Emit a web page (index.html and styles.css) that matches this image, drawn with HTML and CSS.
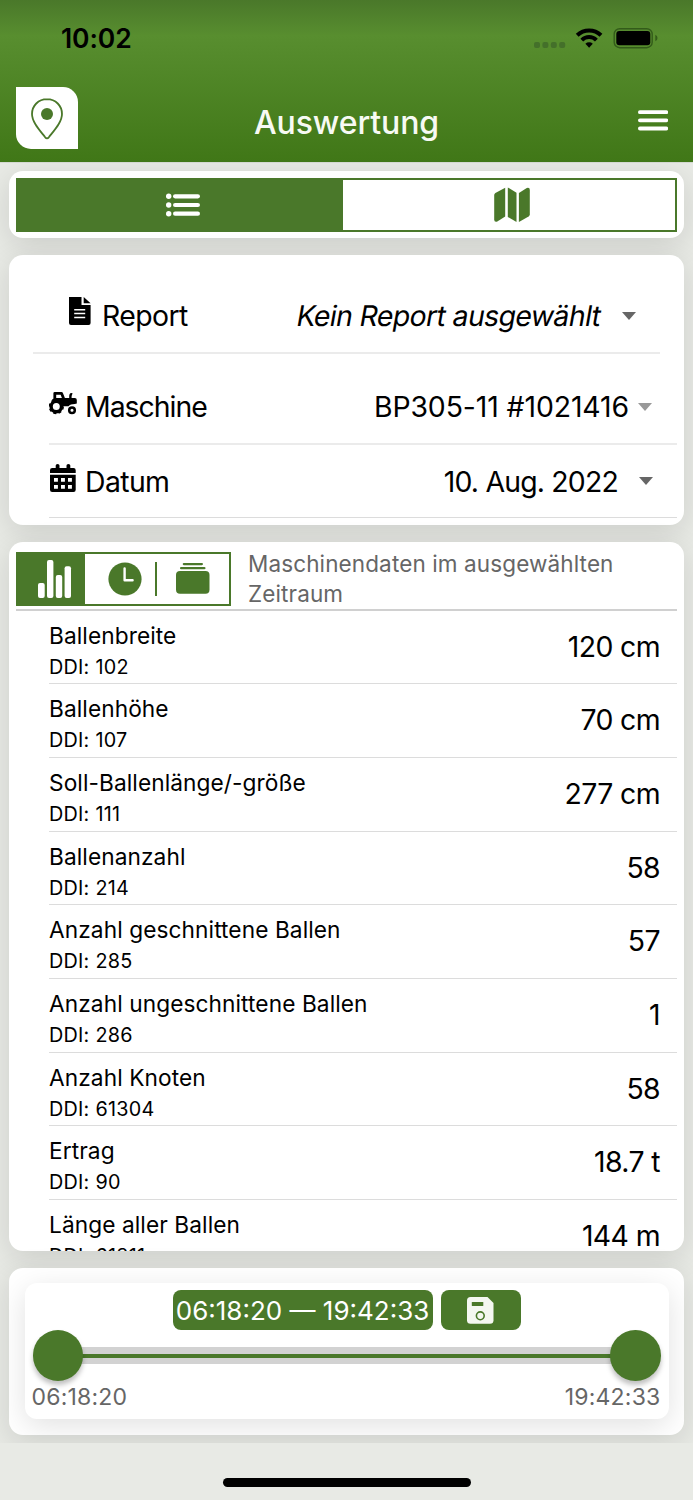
FILE: index.html
```html
<!DOCTYPE html>
<html lang="de">
    <head>
        <meta charset="UTF-8">
        <title>Auswertung</title>
        <link rel="stylesheet" href="styles.css">
    </head>
    <body>
        <header>
            <div class="statusbar">
                <span class="clock">10:02</span>
                <svg class="status-icons" width="124" height="24" viewBox="0 0 124 24">
                    <g fill="#44702a">
                        <rect x="0" y="15" width="6" height="6" rx="2"/>
                        <rect x="8.4" y="15" width="6" height="6" rx="2"/>
                        <rect x="16.8" y="15" width="6" height="6" rx="2"/>
                        <rect x="25.2" y="15" width="6" height="6" rx="2"/>
                    </g>
                    <g fill="none" stroke="#000" stroke-width="4">
                        <path d="M43.2 8.3a17.2 17.2 0 0 1 23.8 0"/>
                        <path d="M47.8 13.1a10.4 10.4 0 0 1 14.6 0"/>
                    </g>
                    <path d="M51.4 16.8a5.4 5.4 0 0 1 7.4 0L55.1 20.8z"/>
                    <rect x="80.2" y="1.7" width="38" height="19" rx="5.5" fill="none" stroke="#335b1a" stroke-width="1.4"/>
                    <rect x="82.3" y="4" width="34" height="14.2" rx="3"/>
                    <path d="M121.3 7.8q2.2 1 2.2 3.2t-2.2 3.2z" fill="#335b1a"/>
                </svg>
            </div>
            <div class="toolbar">
                <div class="logo">
                    <svg width="32" height="42" viewBox="0 0 32 42">
                        <path d="M16 1.2C7.4 1.2 1 7.7 1 16c0 8 7.5 16 13.2 23.3q1.8 2 3.6 0C23.5 32 31 24 31 16 31 7.7 24.6 1.2 16 1.2z" fill="none" stroke="#4a782a" stroke-width="1.8"/>
                        <circle cx="16" cy="16" r="6" fill="#4a782a"/>
                    </svg>
                </div>
                <h1>Auswertung</h1>
                <svg class="menu" width="30" height="21" viewBox="0 0 30 21" stroke="#fff" stroke-width="3.8" stroke-linecap="round">
                    <path d="M1.9 2.2h26.4M1.9 10.3h26.4M1.9 18.5h26.4"/>
                </svg>
            </div>
        </header>

        <main>
            <section class="card switch-card">
                <div class="switch">
                    <div class="switch-item active">
                        <svg width="34" height="24" viewBox="0 0 34 24" fill="#fff">
                            <circle cx="2.7" cy="3.3" r="2.7"/>
                            <circle cx="2.7" cy="12" r="2.7"/>
                            <circle cx="2.7" cy="20.7" r="2.7"/>
                            <rect x="7" y="1.2" width="27" height="4.2" rx="2.1"/>
                            <rect x="7" y="9.9" width="27" height="4.2" rx="2.1"/>
                            <rect x="7" y="18.6" width="27" height="4.2" rx="2.1"/>
                        </svg>
                    </div>
                    <div class="switch-item">
                        <svg width="36" height="36" viewBox="0 0 36 36" fill="#4a782a">
                            <path d="M11.2.8v28.800L3.300 34.600Q.2 35.600.2 32.600V8q0-1.200 1.200-2z"/>
                            <path d="M13.8.5l8.700 5.200v29.400l-8.700-5.200z"/>
                            <path d="M24.9 6l7.900-5q3-.8 3 2v24.600q0 1.200-1.200 2l-9.700 5.500z"/>
                        </svg>
                    </div>
                </div>
            </section>

            <section class="card filters">
                <div class="filter report">
                    <svg class="doc" width="22" height="28" viewBox="0 0 22 28">
                        <path d="M0 0h12.500v8H21.600v18q0 2-2 2H2q-2 0-2-2z"/>
                        <path d="M14.700 0l6.900 6.300h-6.900z"/>
                        <path d="M5.200 12.800h11M5.200 16.600h11M5.200 20.600h11" stroke="#fff" stroke-width="1.500"/>
                    </svg>
                    <span class="name">Report</span>
                    <span class="choice none">Kein Report ausgewählt</span>
                    <i class="arrow"></i>
                </div>
                <div class="filter machine">
                    <svg class="tractor" width="28" height="24" viewBox="0 0 28 24">
                        <path d="M5.800 8V2.300h6.700L15 8.500" fill="none" stroke="#000" stroke-width="2.800" stroke-linejoin="round"/>
                        <path d="M3 8.500 6 7h14.200V5.500q0-3.500 2-3.500l1.400.300Q22.500 4.500 22.600 7h3.200q2 0 2 2v3.600l-2 .400q-4.500 0-6.300 2.300H14L4 10z"/>
                        <circle cx="7.300" cy="15.600" r="5.200" fill="#fff" stroke="#000" stroke-width="3.400"/>
                        <circle cx="7.300" cy="15.600" r="6.900" fill="none" stroke="#000" stroke-width="1.500" stroke-dasharray="3 2.420"/>
                        <circle cx="23" cy="19.200" r="2.800" fill="#fff" stroke="#000" stroke-width="2.500"/>
                    </svg>
                    <span class="name">Maschine</span>
                    <span class="choice">BP305-11 #1021416</span>
                    <i class="arrow light"></i>
                </div>
                <div class="filter date">
                    <svg class="calendar" width="26" height="28" viewBox="0 0 26 28">
                        <path d="M5.700 4V1.500q0-1.500 1.900-1.500t1.900 1.500V4h7V1.500q0-1.500 1.900-1.500t1.900 1.500V4H23.500q2.200 0 2.200 2.200V9H0V6.200Q0 4 2.200 4z"/>
                        <path d="M0 10.800h25.700v14.900q0 2.200-2.200 2.200H2.200Q0 27.900 0 25.700z"/>
                        <path d="M4 15.800h18M4 22.800h18" stroke="#fff" stroke-width="3.800" stroke-dasharray="3.900 3.100"/>
                    </svg>
                    <span class="name">Datum</span>
                    <span class="choice">10. Aug. 2022</span>
                    <i class="arrow"></i>
                </div>
            </section>

            <section class="card data">
                <div class="data-head">
                    <div class="tabs">
                        <div class="tab active">
                            <svg width="34" height="38" viewBox="0 0 34 38" fill="#fff">
                                <rect x="0" y="23" width="6.700" height="15" rx="2"/>
                                <rect x="9" y="0" width="6.400" height="38" rx="2"/>
                                <rect x="17.800" y="15" width="6.400" height="23" rx="2"/>
                                <rect x="26.600" y="6.300" width="6.400" height="31.700" rx="2"/>
                            </svg>
                        </div>
                        <div class="tab time">
                            <svg width="34" height="34" viewBox="0 0 34 34">
                                <circle cx="17" cy="17" r="16.600" fill="#4a782a"/>
                                <path d="M16.600 6.500v11.800h8" fill="none" stroke="#fff" stroke-width="2.400" stroke-linecap="round" stroke-linejoin="round"/>
                            </svg>
                        </div>
                        <div class="tab">
                            <svg width="34" height="31" viewBox="0 0 34 31" fill="#4a782a">
                                <rect x="6.700" y="0" width="20.300" height="2.200" rx="1.100"/>
                                <rect x="4" y="4" width="25.500" height="2.300" rx="1.100"/>
                                <rect x="0" y="8" width="33.500" height="22.700" rx="4"/>
                            </svg>
                        </div>
                    </div>
                    <p>Maschinendaten im ausgewählten Zeitraum</p>
                </div>
                <ul>
                    <li><div><h3>Ballenbreite</h3><small>DDI: 102</small></div><span>120 cm</span></li>
                    <li><div><h3>Ballenhöhe</h3><small>DDI: 107</small></div><span>70 cm</span></li>
                    <li><div><h3>Soll-Ballenlänge/-größe</h3><small>DDI: 111</small></div><span>277 cm</span></li>
                    <li><div><h3>Ballenanzahl</h3><small>DDI: 214</small></div><span>58</span></li>
                    <li><div><h3>Anzahl geschnittene Ballen</h3><small>DDI: 285</small></div><span>57</span></li>
                    <li><div><h3>Anzahl ungeschnittene Ballen</h3><small>DDI: 286</small></div><span>1</span></li>
                    <li><div><h3>Anzahl Knoten</h3><small>DDI: 61304</small></div><span>58</span></li>
                    <li><div><h3>Ertrag</h3><small>DDI: 90</small></div><span>18.7 t</span></li>
                    <li><div><h3>Länge aller Ballen</h3><small>DDI: 61311</small></div><span>144 m</span></li>
                </ul>
            </section>

            <section class="card slider-card">
                <div class="slider">
                    <div class="range-head">
                        <div class="range">06:18:20 — 19:42:33</div>
                        <div class="save">
                            <svg width="27" height="27" viewBox="0 0 27 27">
                                <path d="M3.500 0h17l6 6v17.200q0 3.500-3.500 3.500H3.500Q0 26.700 0 23.200V3.500Q0 0 3.500 0z" fill="#f4f7f1"/>
                                <rect x="4.800" y="5" width="11.500" height="4" rx=".5" fill="#4a782a"/>
                                <circle cx="13.300" cy="18.800" r="3.900" fill="none" stroke="#4a782a" stroke-width="1.600"/>
                            </svg>
                        </div>
                    </div>
                    <div class="track">
                        <div class="knob"></div>
                        <div class="line"></div>
                        <div class="knob"></div>
                    </div>
                    <div class="ends">
                        <span>06:18:20</span>
                        <span>19:42:33</span>
                    </div>
                </div>
            </section>
        </main>
        <footer><div class="home"></div></footer>
    </body>
</html>
```
FILE: styles.css
```css
* {
    box-sizing: border-box;
}
body {
    margin: 0;
    width: 693px;
    height: 1500px;
    overflow: hidden;
    background-color: #e8eae5;
    color: #000;
    font-family: Inter,"Liberation Sans",sans-serif;
}
h1, h3, p, ul {
    margin: 0;
    padding: 0;
    font-weight: normal;
}
svg {
    display: block;
    flex: none;
}

header {
    height: 162px;
    background: linear-gradient(#4a782a, #588e2f 36px, #568c2d 46px, #407717);
}
.statusbar {
    height: 76px;
    padding: 0 35px 0 61px;
    display: flex;
    justify-content: space-between;
    align-items: center;
}
.status-icons {
    margin-top: 2px;
}
.clock {
    font-size: 26.5px;
    font-weight: 600;
    letter-spacing: -.1px;
}
.toolbar {
    height: 86px;
    padding: 11px 25px 0 16px;
    display: flex;
    justify-content: space-between;
}
.logo {
    width: 62px;
    height: 62px;
    padding: 11px 0 0 15px;
    background-color: white;
    border-radius: 0 15px 0 15px;
}
h1 {
    margin-left: -23px;
    line-height: 71px;
    color: #f7faf4;
    font-size: 32px;
    font-weight: 500;
    letter-spacing: -.1px;
}
.menu {
    margin-top: 23px;
}

main {
    height: 1281px;
    padding: 8px 9px 0 9px;
    overflow: hidden;
    border-top: 1px solid #d4d8d1;
}
.card {
    background-color: white;
    border-radius: 14px;
    box-shadow: 0 7px 30px rgba(0,0,0,.12);
}

.switch-card {
    height: 67px;
    padding: 7px;
}
.switch {
    height: 53.5px;
    display: flex;
    border: 2px solid #4a782a;
}
.switch-item {
    flex: 1;
    display: flex;
    justify-content: center;
    align-items: center;
}
.switch-item.active {
    flex: none;
    width: 325px;
    padding-left: 5px;
    background-color: #4a782a;
}
.switch-item:last-child {
    padding-left: 6px;
}

.filters {
    height: 269.5px;
    margin-top: 17px;
    padding: 24px 7px 0 24px;
}
.filter {
    display: flex;
    align-items: center;
    margin-left: 16px;
    border-bottom: 2px solid #ebebeb;
    font-size: 28.4px;
    letter-spacing: -.6px;
}
.report {
    height: 75px;
    margin: 0 17px 17px 0;
    padding-left: 36px;
}
.machine {
    height: 74px;
    padding-bottom: 1px;
}
.machine .name {
    letter-spacing: -1px;
}
.machine .choice {
    letter-spacing: -.1px;
}
.date {
    height: 73px;
    border-bottom: 1px solid #dcdcdc;
}
.date .choice {
    letter-spacing: -.8px;
}
.doc {
    margin: -9px 11px 0 0;
}
.tractor {
    margin: -7px 8px 0 0;
}
.calendar {
    margin: -7px 9px 0 1px;
}
.choice {
    margin-left: auto;
}
.none {
    transform: skewX(-10deg);
}
.arrow {
    border: 7.5px solid transparent;
    border-top: 8px solid #666;
    border-bottom: 0;
    margin: 0 24px 0 21px;
}
.arrow.light {
    border-top-color: #999;
    margin: 0 25px 0 9px;
}

.data {
    height: 708.5px;
    margin-top: 17.5px;
    overflow: hidden;
}
.data-head {
    height: 68.5px;
    margin: 0 7px;
    padding-top: 10px;
    display: flex;
    border-bottom: 2px solid #d0d0d0;
}
.tabs {
    width: 214.5px;
    height: 53.5px;
    flex: none;
    display: flex;
    border: 2px solid #4a782a;
}
.tab {
    flex: 1;
    display: flex;
    align-items: center;
    justify-content: center;
}
.tab.active {
    flex: none;
    width: 67px;
    padding-left: 7px;
    background-color: #4a782a;
}
.tab.time {
    position: relative;
    flex: none;
    width: 72px;
    padding-left: 8px;
}
.tab.time::after {
    content: "";
    width: 2px;
    height: 34px;
    position: absolute;
    right: 0;
    background-color: #4a782a;
}
.data-head p {
    padding-left: 17.5px;
    margin-top: -3px;
    color: #666;
    font-size: 22.5px;
    line-height: 30px;
    letter-spacing: .12px;
}
li {
    height: 73.7px;
    margin: 0 7px 0 40px;
    padding-right: 17px;
    display: flex;
    justify-content: space-between;
    border-bottom: 1px solid #dcdcdc;
}
li div {
    padding-top: 9px;
}
li h3 {
    font-size: 22.7px;
    line-height: 31px;
    letter-spacing: .08px;
}
li small {
    display: block;
    font-size: 19.8px;
    line-height: 32px;
    letter-spacing: .25px;
}
li span {
    font-size: 28.4px;
    line-height: 72.5px;
    letter-spacing: -.6px;
}

.slider-card {
    height: 166.5px;
    margin-top: 17.5px;
    padding: 15px 15.5px;
    overflow: hidden;
}
.slider {
    height: 136px;
    padding: 7px 8px 0;
    background-color: white;
    border-radius: 12px;
    box-shadow: 0 7px 30px rgba(0,0,0,.12);
}
.range-head {
    display: flex;
    justify-content: center;
    gap: 8px;
}
.range, .save {
    height: 40px;
    border-radius: 8px;
    background-color: #4a782a;
    color: white;
}
.range {
    width: 260px;
    font-size: 26px;
    line-height: 42px;
    text-align: center;
    white-space: nowrap;
}
.save {
    width: 80px;
    display: flex;
    justify-content: center;
    align-items: center;
}
.track {
    height: 51px;
    display: flex;
    align-items: center;
}
.knob {
    width: 50.5px;
    height: 50.5px;
    border-radius: 50%;
    background-color: #4a782a;
    box-shadow: 0 4px 5px rgba(0,0,0,.25);
    z-index: 1;
}
.line {
    flex: 1;
    height: 17px;
    margin: 0 -5px;
    border: solid #d2d2d2;
    border-width: 7px 0 6px;
    background-color: #4a782a;
}
.ends {
    display: flex;
    justify-content: space-between;
    margin: 0 0 0 -1px;
    color: #666;
    font-size: 23px;
    line-height: 33px;
    letter-spacing: .2px;
}

footer {
    height: 57px;
    padding-top: 35px;
}
.home {
    width: 248px;
    height: 8.5px;
    margin: 0 auto;
    border-radius: 5px;
    background-color: #000;
}
```
